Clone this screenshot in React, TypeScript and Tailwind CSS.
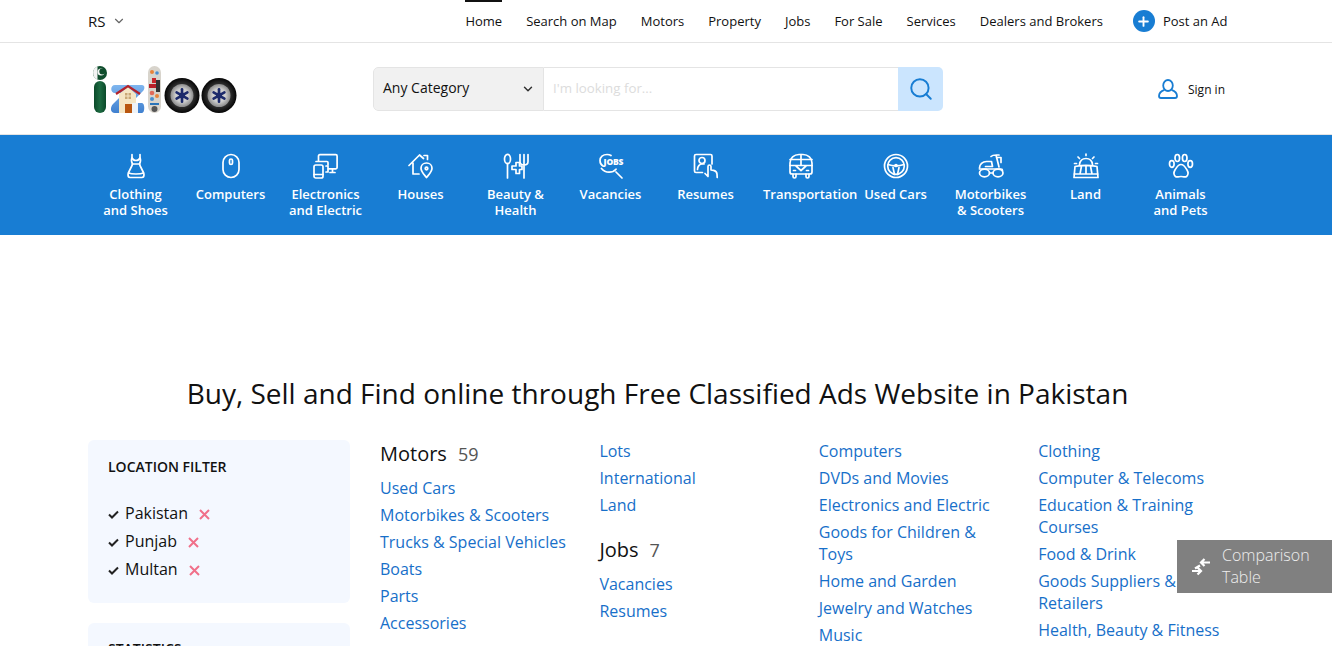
import { ChevronDown, Plus, Search } from "lucide-react";
import type { ReactNode } from "react";

const Ico = ({ children }: { children: ReactNode }) => (
  <svg
    width="26"
    height="26"
    viewBox="0 0 26 26"
    fill="none"
    stroke="white"
    strokeWidth="1.7"
    strokeLinecap="round"
    strokeLinejoin="round"
  >
    {children}
  </svg>
);

const icons: Record<string, ReactNode> = {
  dress: (
    <Ico>
      <path d="M9 1.500v3.500c-1 2-.5 4 .5 6h7c1-2 1.500-4 .5-6V1.500" />
      <path d="M9 5c1 2 2.500 2.500 4 2.500S16 7 17 5" />
      <path d="M9.500 11C9 14 5.500 18 5 21.500 5 23.500 6 24.500 7 24.500h12c1 0 2-1 2-3C20.500 18 17 14 16.500 11" />
      <path d="M5.500 20c2.500 1 5 1 7.500 1s5 0 7.500-1" />
    </Ico>
  ),
  mouse: (
    <Ico>
      <rect x="5" y="1.500" width="16" height="23" rx="8" />
      <rect x="11.500" y="6" width="3" height="5.500" rx="1.500" />
    </Ico>
  ),
  devices: (
    <Ico>
      <path d="M5.500 8V3c0-.8.5-1.300 1.300-1.300h16c.8 0 1.300.5 1.300 1.300v11.500c0 .8-.5 1.300-1.300 1.300h-7M17 19.500h5M19.500 16v3.500" />
      <path d="M3 8.500h11c.7 0 1 .4 1 1V12" />
      <rect x="1" y="12" width="9" height="13" rx="1.800" />
      <path d="M1 21.500h9M13 13h2v6h-2" />
    </Ico>
  ),
  house: (
    <Ico>
      <path d="M1 12.500L11.500 2l4 3.500M5 10v11h6M19.500 2.500v4M16 2.500h3.500" />
      <path d="M18.500 10c3.200 0 5.500 2.300 5.500 5.200 0 3.400-3.300 6.500-5.500 9.300-2.200-2.800-5.500-5.900-5.500-9.300 0-2.900 2.300-5.200 5.500-5.200z" />
      <circle cx="18.500" cy="15.500" r="1.300" />
    </Ico>
  ),
  beauty: (
    <Ico>
      <ellipse cx="4.500" cy="6" rx="3" ry="4.700" />
      <path d="M4.500 10.700V25M21 1.500v23.500M17 1.500v7c0 2.300 1.800 3.500 4 3.500s4-1.200 4-3.500v-7" />
      <path d="M9 13h4v-3.500h3.500V13h2.500v3.500h-2.500v4H13v-4H9z" />
    </Ico>
  ),
  jobs: (
    <Ico>
      <path d="M5 13c-2-1-3-3-3-5.500C2 4 5 1.500 9 1.500c1.500 0 3 .3 4 1M3.500 15.500c2 2.500 4.500 3.700 7.500 3.700 3.200 0 5.500-1.200 7-3M18 19l6 6" />
      <text x="5.600" y="12" stroke="none" fill="white" fontSize="8.500" fontWeight="800" fontFamily="'Open Sans', sans-serif" letterSpacing="-.2">JOBS</text>
    </Ico>
  ),
  resume: (
    <Ico>
      <path d="M9.500 19.500H3c-1 0-1.500-.5-1.500-1.500V3c0-1 .5-1.500 1.500-1.500h14.500c1 0 1.500.5 1.500 1.500v8" />
      <circle cx="9" cy="7.500" r="3" />
      <path d="M4.500 16.500c0-3 2-5.500 4.500-5.500h2" />
      <path d="M12 20.500l3 3V13.500c0-2 3-2 3 0v3.500l2.500.3c2 .3 3.300 1.200 3.500 3.700l.2 3.500" />
    </Ico>
  ),
  van: (
    <Ico>
      <path d="M2 14V10C2 5 6 1.500 11 1.500h4C20 1.500 24 5 24 10v9c0 1-.5 2-2 2H4c-1.500 0-2-1-2-2z" />
      <path d="M2 6.500h22M2 12.500h22M13 1.500v11M5 21v2.500c0 1 .5 1.500 1.500 1.500S8 24.500 8 23.500V21M18 21v2.500c0 1 .5 1.500 1.500 1.500s1.500-.5 1.500-1.500V21M8 13l5 4.500 5-4.500M5.500 17.500h2M18.500 17.500h2" />
    </Ico>
  ),
  wheel: (
    <Ico>
      <circle cx="13" cy="13" r="11.500" />
      <circle cx="13" cy="13" r="8.300" />
      <path d="M5 11.500c3 1 5 1.300 8 1.300s5-.3 8-1.300M10 14.500l1.500 7M16 14.500l-1.500 7" />
      <circle cx="13" cy="12.500" r="1" />
    </Ico>
  ),
  scooter: (
    <Ico>
      <path d="M13 3.500c1-1 2.500-1.500 5-1.500h3M18 2l3 12M18.500 4.500h4.500v5" />
      <path d="M1.500 15c0-3.500 3-6.500 7-6.500h5l1 5H7.500" />
      <path d="M1.500 16h21.500c1 0 1.500.5 1.500 1.500" />
      <ellipse cx="6.500" cy="20" rx="5" ry="3.800" />
      <ellipse cx="20" cy="20" rx="5" ry="3.800" />
      <path d="M11.500 20h3.500" />
    </Ico>
  ),
  land: (
    <Ico>
      <path d="M6.500 11.500C7 7.500 9.500 5.500 13 5.500s6 2 6.500 6M13 1v1.500M5 4l1.500 1.500M21 4l-1.500 1.500M1.500 10.500h2M22.500 10.500h2" />
      <path d="M2 13.500c7-1.500 15-1.500 22 0l1 11H1zM1 21h24M8.500 13l-1.500 8M13 12.500V21M17.500 13l1.500 8" />
    </Ico>
  ),
  paw: (
    <Ico>
      <ellipse cx="3.800" cy="11" rx="2.300" ry="3.300" />
      <ellipse cx="9.300" cy="5" rx="2.300" ry="3.500" />
      <ellipse cx="16.700" cy="5" rx="2.300" ry="3.500" />
      <ellipse cx="22.200" cy="11" rx="2.300" ry="3.300" />
      <path d="M13 11.500c3 0 4.500 3 6 5.500 1.500 2.500 2 4-.3 6.300-1.500 1.500-3.700.2-5.700.2s-4.200 1.300-5.700-.2c-2.300-2.300-1.800-3.800-.3-6.300 1.500-2.500 3-5.500 6-5.500z" />
    </Ico>
  ),
};

const categories = [
  { icon: "dress", lines: ["Clothing", "and Shoes"] },
  { icon: "mouse", lines: ["Computers"] },
  { icon: "devices", lines: ["Electronics", "and Electric"] },
  { icon: "house", lines: ["Houses"] },
  { icon: "beauty", lines: ["Beauty &", "Health"] },
  { icon: "jobs", lines: ["Vacancies"] },
  { icon: "resume", lines: ["Resumes"] },
  { icon: "van", lines: ["Transportation"] },
  { icon: "wheel", lines: ["Used Cars"] },
  { icon: "scooter", lines: ["Motorbikes", "& Scooters"] },
  { icon: "land", lines: ["Land"] },
  { icon: "paw", lines: ["Animals", "and Pets"] },
];

const navLinks = ["Search on Map", "Motors", "Property", "Jobs", "For Sale", "Services", "Dealers and Brokers"];

const Logo = () => (
  <svg width="148" height="48" viewBox="0 0 148 48">
    <defs>
      <radialGradient id="tyre" cx="50%" cy="50%" r="50%">
        <stop offset="70%" stopColor="#2a2a2a" />
        <stop offset="100%" stopColor="#050505" />
      </radialGradient>
      <radialGradient id="rim" cx="50%" cy="50%" r="50%">
        <stop offset="55%" stopColor="#cfcfcf" />
        <stop offset="100%" stopColor="#8b8b8b" />
      </radialGradient>
      <linearGradient id="green" x1="0" x2="1" y1="0" y2="0">
        <stop offset="0%" stopColor="#0b4a2a" />
        <stop offset="50%" stopColor="#1d6b42" />
        <stop offset="100%" stopColor="#0b4a2a" />
      </linearGradient>
      <linearGradient id="blue" x1="0" x2="0" y1="0" y2="1">
        <stop offset="0%" stopColor="#7fb6ef" />
        <stop offset="100%" stopColor="#3f80cf" />
      </linearGradient>
    </defs>
    {/* i */}
    <circle cx="8" cy="7" r="7" fill="#0f4d2c" />
    <path d="M5.500 .5A7 7 0 0 0 5.500 13.500z" fill="#f4f4f4" />
    <circle cx="9" cy="6" r="3.500" fill="#f4f4f4" />
    <circle cx="10.300" cy="5.500" r="3" fill="#0f4d2c" />
    <rect x="2" y="15" width="12" height="32" rx="6" fill="url(#green)" />
    {/* z with the house */}
    <path d="M23 19h27c3 0 3 4 1 6L39 37h11c3 0 3 10 0 10H23c-5 0-5-6-2-9l11-11H23c-5 0-5-8 0-8z" fill="url(#blue)" />
    <path d="M27 47V28l9-7 8 7v9h-4v10z" fill="#f5e6c4" />
    <path d="M40 37h6v10h-6z" fill="#eef3f8" />
    <rect x="33" y="38" width="7" height="9" fill="#b9560f" />
    <rect x="33" y="27" width="6" height="6" fill="#c9a876" />
    <path d="M33 30h6M36 27v6" stroke="#f5e6c4" />
    <path d="M24 28l12-8 12 8" fill="none" stroke="#b3222a" strokeWidth="2.200" />
    {/* l with the little pictures */}
    <rect x="56" y="0" width="13" height="47" rx="6.500" fill="#d8d4cc" />
    <circle cx="60" cy="6" r="2" fill="#e8833a" />
    <circle cx="65" cy="7" r="1.800" fill="#4a8fd0" />
    <rect x="60" y="12" width="4" height="5" fill="#c9272c" />
    <path d="M57 18h7v4h-7z" fill="#b8202a" />
    <rect x="64" y="14" width="4" height="12" fill="#333" />
    <circle cx="60" cy="27" r="2.300" fill="#e06a5a" />
    <circle cx="65" cy="30" r="2" fill="#e8833a" />
    <circle cx="60" cy="33" r="2" fill="#4a8fd0" />
    <rect x="58" y="37" width="9" height="2" fill="#2b74b8" />
    <circle cx="62.500" cy="43" r="3" fill="#555" />
    {/* tyres */}
    {[90, 127].map((cx) => (
      <g key={cx}>
        <circle cx={cx} cy="29.500" r="17.500" fill="url(#tyre)" />
        <circle cx={cx} cy="29.500" r="11.500" fill="url(#rim)" />
        {[0, 60, 120].map((a) => (
          <rect key={a} x={cx - 1.300} y="22" width="2.600" height="15" rx="1.200" fill="#1c2a6b" transform={`rotate(${a} ${cx} 29.500)`} />
        ))}
        <circle cx={cx} cy="29.500" r="3" fill="#1c2a6b" />
      </g>
    ))}
  </svg>
);

const LinkList = ({ items }: { items: string[] }) => (
  <ul className="flex flex-col gap-[5px]">
    {items.map((t) => (
      <li key={t} className="text-[16px] leading-[22px] text-[#176fc9] w-[192px]">
        {t}
      </li>
    ))}
  </ul>
);

const Heading = ({ name, count }: { name: string; count: number }) => (
  <h3 className="text-[20px] leading-[28px] text-[#111] flex gap-[11px]">
    {name} <span className="text-[#555] text-[18px]">{count}</span>
  </h3>
);

export default function App() {
  return (
    <div className="relative h-screen overflow-hidden bg-white text-[#111] font-['Open_Sans',sans-serif]">
      {/* top bar */}
      <div className="border-b border-[#e4e4e4] h-[43px]">
        <div className="ml-[88px] w-[1139.500px] h-[42px] flex items-center justify-between">
          <div className="flex items-center gap-[7px] text-[15px]">
            RS <ChevronDown size={14} className="text-[#666]" />
          </div>
          <nav className="flex items-center h-full text-[13px] gap-[24px]">
            <span className="h-full flex items-center border-t-2 border-[#111]">Home</span>
            {navLinks.map((n) => (
              <span key={n} className="pt-[2px]">
                {n}
              </span>
            ))}
            <span className="flex items-center gap-[8px] ml-[6px] pt-[2px]">
              <span className="w-[22px] h-[22px] -mt-[2px] rounded-full bg-[#187dd3] flex items-center justify-center">
                <Plus size={15} strokeWidth={3} className="text-white" />
              </span>
              Post an Ad
            </span>
          </nav>
        </div>
      </div>

      {/* logo, search, sign in */}
      <div className="h-[92px] border-b border-[#e4e4e4]">
        <div className="mx-[88px] w-[1140px] h-full flex items-center">
          <div className="w-[285px] pl-[4px] pt-[2px]">
            <Logo />
          </div>
          <div className="w-[570px] h-[44px] flex rounded-[5px] overflow-hidden">
            <div className="w-[171px] bg-[#f1f1f1] border border-[#e4e4e4] rounded-l-[5px] flex items-center justify-between pl-[9px] pr-[8px] pb-[2px] text-[14px]">
              Any Category <ChevronDown size={14} strokeWidth={2.500} className="text-[#333] mt-[2px]" />
            </div>
            <div className="flex-1 border-y border-[#e4e4e4] flex items-center pl-[9px] text-[13.300px] text-[#dcdcdc]">
              I'm looking for...
            </div>
            <div className="w-[45px] bg-[#cbe5fe] flex items-center justify-center">
              <Search size={26} strokeWidth={1.800} className="text-[#187dd3]" />
            </div>
          </div>
          <div className="ml-auto flex items-center gap-[10px] text-[12px] pr-[3px]">
            <svg width="20" height="20" viewBox="0 0 20 20" fill="none" stroke="#187dd3" strokeWidth="1.800">
              <ellipse cx="10" cy="6.500" rx="4.800" ry="5.500" />
              <path d="M6.500 10.800C3 12 1 14 1 17c0 1.300.8 2 2 2h14c1.200 0 2-.7 2-2 0-3-2-5-5.500-6.200" />
            </svg>
            <span className="pt-[2px]">Sign in</span>
          </div>
        </div>
      </div>

      {/* categories */}
      <div className="h-[100px] bg-[#187dd3]">
        <div className="mx-[88px] w-[1140px] flex">
          {categories.map((c) => (
            <div key={c.icon} className="w-[95px] flex flex-col items-center pt-[18px] text-white text-[13px] leading-[16px] font-semibold">
              <div className="mb-[7px] h-[26px]">{icons[c.icon]}</div>
              <div className="w-[75px] text-center whitespace-nowrap">
                {c.lines.map((l) => (
                  <div key={l}>{l}</div>
                ))}
              </div>
            </div>
          ))}
        </div>
      </div>

      <div className="ml-[87.500px] w-[1140px] pt-[138px]">
        <h1 className="text-[28px] leading-[40px] text-center text-[#111]">
          Buy, Sell and Find online through Free Classified Ads Website in Pakistan
        </h1>

        <div className="flex mt-[27px] ml-[0.500px]">
          <aside className="w-[262px] shrink-0 flex flex-col gap-[20px]">
            <div className="h-[163px] bg-[#f4f8ff] rounded-[6px] px-[20px] pt-[18px]">
              <h4 className="text-[14px] leading-[18px] font-semibold">LOCATION FILTER</h4>
              <ul className="mt-[25px] flex flex-col gap-[4px] text-[16px] leading-[24px]">
                {["Pakistan", "Punjab", "Multan"].map((p) => (
                  <li key={p} className="flex items-center">
                    <svg width="11" height="9" viewBox="0 0 11 9" className="mr-[6px] mt-[2px]" fill="none" stroke="#222" strokeWidth="2">
                      <path d="M1 4.500l3 3 6-6" />
                    </svg>
                    {p}
                    <svg width="11" height="11" viewBox="0 0 11 11" className="ml-[11px] mt-[2px]" fill="none" stroke="#f0708a" strokeWidth="2">
                      <path d="M1 1l9 9M10 1l-9 9" />
                    </svg>
                  </li>
                ))}
              </ul>
            </div>
            <div className="h-[163px] bg-[#f4f8ff] rounded-[6px] px-[20px] pt-[17px]">
              <h4 className="text-[14px] leading-[18px] font-semibold">STATISTICS</h4>
            </div>
          </aside>

          <div className="ml-[30px] flex-1 grid grid-cols-[219.400px_219.400px_219.400px_1fr]">
            <div>
              <Heading name="Motors" count={59} />
              <div className="mt-[9px]">
                <LinkList items={["Used Cars", "Motorbikes & Scooters", "Trucks & Special Vehicles", "Boats", "Parts", "Accessories"]} />
              </div>
            </div>
            <div>
              <LinkList items={["Lots", "International", "Land"]} />
              <div className="mt-[20px]">
                <Heading name="Jobs" count={7} />
              </div>
              <div className="mt-[9px]">
                <LinkList items={["Vacancies", "Resumes"]} />
              </div>
            </div>
            <LinkList items={["Computers", "DVDs and Movies", "Electronics and Electric", "Goods for Children & Toys", "Home and Garden", "Jewelry and Watches", "Music"]} />
            <LinkList items={["Clothing", "Computer & Telecoms", "Education & Training Courses", "Food & Drink", "Goods Suppliers & Retailers", "Health, Beauty & Fitness"]} />
          </div>
        </div>
      </div>

      {/* floating comparison button */}
      <div className="absolute left-[1177px] top-[540px] w-[155px] h-[53px] bg-[#808080] flex items-center text-[16px] leading-[22px] text-[#eeeeee] font-light">
        <svg width="20" height="20" viewBox="0 0 20 20" className="ml-[14px] mr-[11px] shrink-0" fill="none" stroke="white" strokeWidth="2.200">
          <path d="M19 5.500h-9M13.500 2L10 5.500 13.500 9M1 14h9M6.500 10.500L10 14l-3.500 3.500M9 8.500l-5 3" />
        </svg>
        <span className="pb-[2px]">
          Comparison
          <br />
          Table
        </span>
      </div>
    </div>
  );
}
